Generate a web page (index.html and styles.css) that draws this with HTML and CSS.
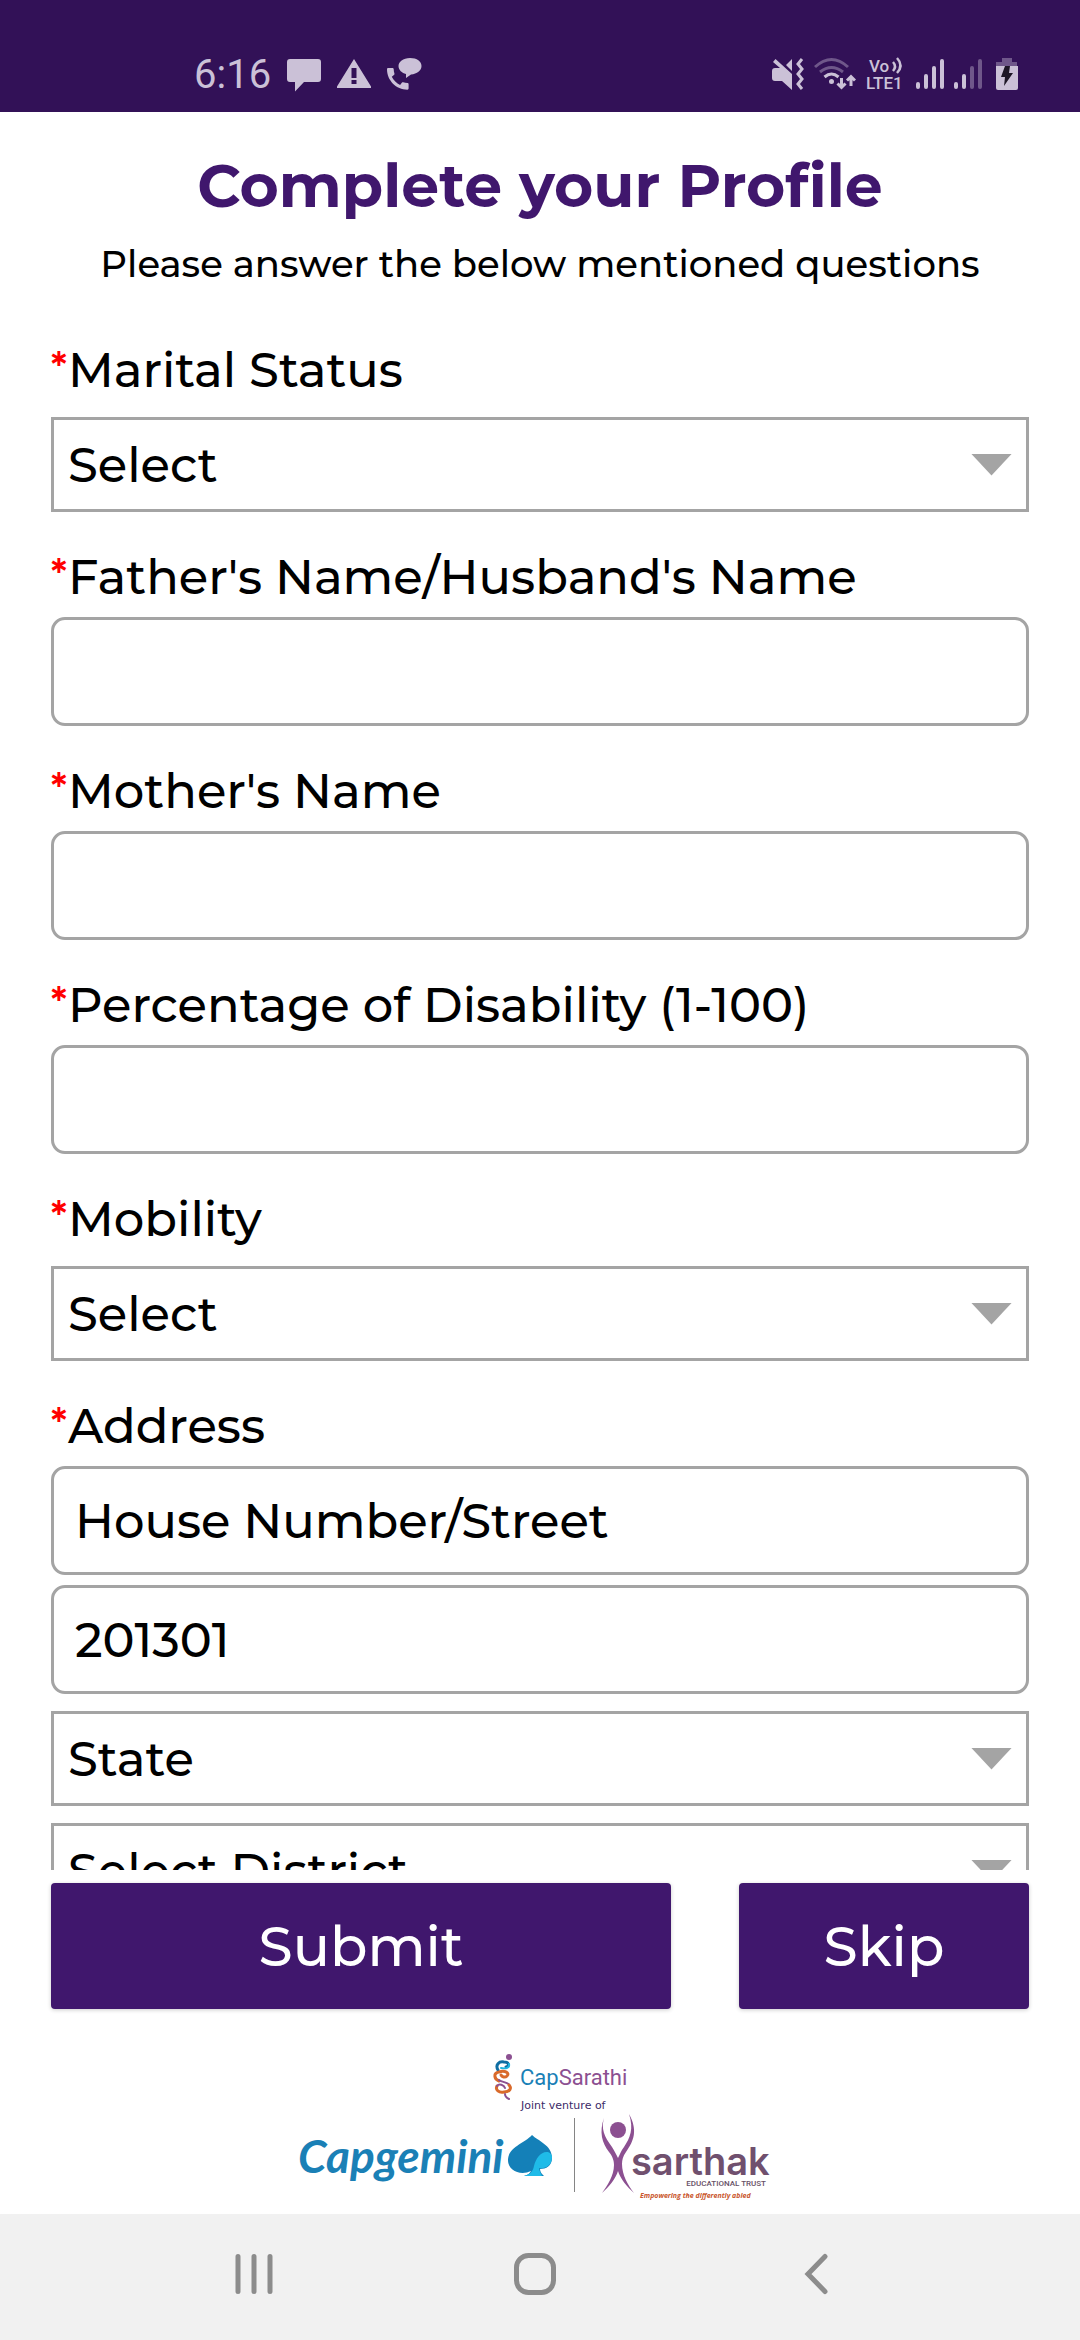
FILE: index.html
```html
<!DOCTYPE html>
<html lang="en">
<head>
  <meta charset="UTF-8" />
  <meta name="viewport" content="width=device-width, initial-scale=1.0" />
  <title>Complete your Profile - CapSarathi</title>
  <link rel="stylesheet" href="styles.css">
</head>
<body>
  <header class="status-bar">
    <div class="status-group">
      <span class="clock">6:16</span>
      <svg width="34" height="36" viewBox="0 0 34 36" fill="currentColor">
        <path d="M3 3h28a3 3 0 0 1 3 3v17a3 3 0 0 1-3 3H17L8 35.500V26H3a3 3 0 0 1-3-3V6a3 3 0 0 1 3-3z"/>
      </svg>
      <svg width="34" height="36" viewBox="0 0 34 36" fill="currentColor">
        <path fill-rule="evenodd" d="M17 3 34 30.500V32H0v-1.500zM14.500 12v10h5V12zm0 12v4h5v-4z"/>
      </svg>
      <svg width="35" height="36" viewBox="0 0 35 36" fill="currentColor">
        <path transform="translate(-3.600 8.500) scale(1.200)" d="M20 15.400c-1.200 0-2.400-.2-3.500-.6-.4-.1-.7 0-1 .2L13.900 17c-2.800-1.300-5.500-3.900-6.900-6.800l2-1.700c.2-.2.300-.6.200-1C8.800 6.500 8.600 5.300 8.600 4c0-.5-.4-1-1-1H4.200C3.600 3 3 3.200 3 4c0 9.300 7.700 17 17 17 .7 0 1-.6 1-1.200v-3.400c0-.6-.4-1-1-1z"/>
        <path d="M23 2c7 0 11.500 3.500 11.500 8S30 18 24 18.500L19 22v-4c-4-1-7.500-4-7.500-8S16 2 23 2z"/>
      </svg>
    </div>
    <div class="status-group right">
      <svg width="32" height="36" viewBox="0 0 32 36" fill="currentColor">
        <path d="M0 15a3 3 0 0 1 3-3h5L1 6l2.500-3L20 18v16L10 25H3a3 3 0 0 1-3-3zM14 9l6-6v12z"/>
        <path d="M30 3l-4 5 4 5-4 5 4 5-4 5 4 5" fill="none" stroke="currentColor" stroke-width="3"/>
      </svg>
      <svg width="42" height="36" viewBox="0 0 42 36" fill="none" stroke="currentColor" stroke-width="3">
        <path class="dim" d="M1 11q16.500-15 33 0"/>
        <path class="dim" d="M6 16q11.500-9 23 0"/>
        <path d="M10.500 21q7-6 14 0" />
        <circle cx="17.500" cy="25.500" r="2.500" fill="currentColor" stroke="none"/>
        <path d="M27.500 22v9M23.500 27.500l4 4 4-4M37 30v-9M33 24.500l4-4 4 4"/>
      </svg>
      <svg class="volte" width="40" height="36" viewBox="0 0 40 36" fill="currentColor">
        <text x="3" y="16" font-size="17">Vo</text>
        <text x="0" y="33" font-size="17">LTE1</text>
        <path d="M27 6q4 4.500 0 9M31 2q7 7.500 0 15" fill="none" stroke="currentColor" stroke-width="2.500"/>
      </svg>
      <svg width="28" height="36" viewBox="0 0 28 36" stroke="currentColor" stroke-width="4" stroke-linecap="round">
        <path d="M2 28v3M10 20v11M18 12v19M26 5v26"/>
      </svg>
      <svg width="28" height="36" viewBox="0 0 28 36" stroke="currentColor" stroke-width="4" stroke-linecap="round">
        <path d="M2 28v3M10 20v11"/>
        <path class="dim" d="M18 12v19M26 5v26"/>
      </svg>
      <svg class="battery" width="22" height="36" viewBox="0 0 22 36" fill="currentColor">
        <path class="dim" d="M6 2h10v4h5v5H0V6h6z"/>
        <path d="M0 10h22v22a2 2 0 0 1-2 2H2a2 2 0 0 1-2-2z"/>
        <path d="M9 10h5l-1 7h4L8 30l1-9H5z" fill="#1d1626"/>
      </svg>
    </div>
  </header>

  <main class="profile">
    <h1>Complete your Profile</h1>
    <p class="subtitle">Please answer the below mentioned questions</p>

    <form class="profile-form" id="profile-form">
      <div class="form-group">
        <label for="marital"><span class="required">*</span>Marital Status</label>
        <div class="select-box">
          <select id="marital"><option>Select</option></select>
        </div>
      </div>
      <div class="form-group">
        <label for="father"><span class="required">*</span>Father's Name/Husband's Name</label>
        <input type="text" id="father" />
      </div>
      <div class="form-group">
        <label for="mother"><span class="required">*</span>Mother's Name</label>
        <input type="text" id="mother" />
      </div>
      <div class="form-group">
        <label for="percentage"><span class="required">*</span>Percentage of Disability (1-100)</label>
        <input type="text" id="percentage" inputmode="numeric" />
      </div>
      <div class="form-group">
        <label for="mobility"><span class="required">*</span>Mobility</label>
        <div class="select-box">
          <select id="mobility"><option>Select</option></select>
        </div>
      </div>
      <div class="form-group">
        <label for="address"><span class="required">*</span>Address</label>
        <input type="text" id="address" placeholder="House Number/Street" />
        <input type="text" id="pincode" aria-label="Pincode" value="201301" />
        <div class="select-box">
          <select id="state" aria-label="State"><option>State</option></select>
        </div>
        <div class="select-box">
          <select id="district" aria-label="District"><option>Select District</option></select>
        </div>
      </div>
    </form>

    <div class="actions">
      <button type="submit" form="profile-form">Submit</button>
      <button type="button">Skip</button>
    </div>
  </main>

  <footer class="partners">
    <svg width="500" height="184" viewBox="10 0 500 184" role="img" aria-label="CapSarathi, joint venture of Capgemini and Sarthak Educational Trust">
      <!-- CapSarathi -->
      <g fill="none" stroke-linecap="round">
        <circle cx="229" cy="27" r="3" fill="#8c5091"/>
        <path d="M218 40c-3-5 1-9 6-8 5 0 6 4 2 5" stroke="#0f6ea3" stroke-width="3"/>
        <path d="M221 38c5 1 9 0 8-4" stroke="#1fb5e0" stroke-width="2"/>
        <path d="M219 51c-5-2-6-8 0-9 6-2 11 1 8 4-2 2-5 1-6-1" stroke="#d96a2b" stroke-width="3"/>
        <path d="M219 50c4 3 12 2 11 8" stroke="#8c5091" stroke-width="2"/>
        <path d="M217 56c-2 4 2 7 7 6 6 0 8-4 5-7" stroke="#d96a2b" stroke-width="3"/>
        <path d="M217 56c2-3 7-1 8 2M225 64c0 3 2 4 4 5" stroke="#8c5091" stroke-width="2"/>
        <text class="logo-capsarathi" x="240" y="55" stroke="none" fill="#1a80b6">Cap<tspan fill="#8c5091">Sarathi</tspan></text>
        <text class="logo-joint" x="241" y="79" stroke="none" fill="#3c2a68">Joint venture of</text>
      </g>
      <!-- Capgemini -->
      <g>
        <text class="logo-capgemini" x="18" y="143" fill="#1a80b6">Capgemini</text>
        <path d="M252 105c6 6 20 10 20 23 0 8-6 11-12 11 0 3 2 5 4 7h-20c4-1 6-3 7-5-10 5-23 0-23-11 0-13 17-17 24-25z" fill="#1480b8"/>
        <path d="M272 127c0 9-7 12-13 11 0 3 2 5 3 8h-18c5-1 9-4 10-10 2-8 7-15 14-14 3 1 4 3 4 5z" fill="#1fbbe8"/>
        <path d="M294.500 88v74" stroke="#858585" stroke-width="1"/>
      </g>
      <!-- Sarthak -->
      <g>
        <circle cx="338" cy="100" r="8" fill="#8c5091"/>
        <path d="M324 88c-5 14-2 25 5 34 4 5 5 9 5 13 0 11-7 21-12 28 7-6 14-15 16-22 2 7 9 16 16 22-6-8-12-18-12-29 0-4 1-8 4-12 8-11 12-22 3-38 5 15 1 24-5 33-3 4-4 7-6 11-2-4-4-8-6-11-8-11-11-18-8-29z" fill="#8c5091"/>
        <text class="logo-sarthak" x="351" y="145" fill="#70506e">sarthak</text>
        <text class="logo-trust" x="486" y="156" text-anchor="end" fill="#675066">EDUCATIONAL TRUST</text>
        <text class="logo-tagline" x="360" y="168" fill="#c9562c">Empowering the differently abled</text>
      </g>
    </svg>
  </footer>

  <nav class="nav-bar">
    <button type="button" aria-label="Recent apps">
      <svg width="42" height="42" viewBox="0 0 42 42"><path d="M5 3.500v35M21 3.500v35M37 3.500v35"/></svg>
    </button>
    <button type="button" aria-label="Home">
      <svg width="42" height="42" viewBox="0 0 42 42"><rect x="2.500" y="2.500" width="37" height="37" rx="12"/></svg>
    </button>
    <button type="button" aria-label="Back">
      <svg width="42" height="42" viewBox="0 0 42 42"><path d="M30 3.500 13 21l17 17.500"/></svg>
    </button>
  </nav>
</body>
</html>
```

FILE: styles.css
```css
* {
  margin: 0;
  padding: 0;
  box-sizing: border-box;
}

body {
  height: 100vh;
  display: flex;
  flex-direction: column;
  background: #ffffff;
  color: #000000;
  font-family: Montserrat, Inter, sans-serif;
  font-weight: 500;
}

svg {
  display: block;
  flex: none;
}

.status-bar {
  flex: none;
  height: 112px;
  padding: 0 62px 20px 194px;
  display: flex;
  justify-content: space-between;
  align-items: flex-end;
  background: #321157;
  color: #cbc1d7;
}

.status-group {
  display: flex;
  align-items: center;
  gap: 16px;
  height: 36px;
}

.status-group.right {
  gap: 10px;
}

.clock {
  font-family: Roboto, sans-serif;
  font-size: 40px;
  font-weight: 400;
}

.dim {
  opacity: 0.4;
}

.volte {
  font-family: Roboto, sans-serif;
  font-weight: 500;
}

.battery {
  margin-left: 4px;
}

.profile {
  flex: 1;
  min-height: 0;
  padding: 38px 51px 0;
  display: flex;
  flex-direction: column;
}

h1 {
  color: #40176d;
  font-size: 60px;
  font-weight: 700;
  line-height: 72px;
  text-align: center;
}

.subtitle {
  margin-top: 18px;
  font-size: 37px;
  line-height: 48px;
  text-align: center;
}

.profile-form {
  flex: 1;
  min-height: 0;
  margin-top: 52px;
  overflow: hidden;
  display: flex;
  flex-direction: column;
  gap: 35px;
}

.form-group {
  flex: none;
  display: flex;
  flex-direction: column;
  gap: 10px;
}

label {
  display: flex;
  align-items: flex-start;
  font-size: 48px;
  line-height: 60px;
}

.required {
  width: 17px;
  color: #ff0000;
  font-size: 38px;
  font-weight: 600;
  line-height: 54px;
}

input,
select {
  width: 100%;
  border: 3px solid #a4a4a4;
  background: transparent;
  color: #000000;
  font: inherit;
  font-size: 48px;
  outline: none;
}

input {
  height: 109px;
  padding: 0 21px;
  border-radius: 14px;
}

input::placeholder {
  color: #000000;
  opacity: 1;
}

.select-box {
  display: grid;
  align-items: center;
  margin-top: 7px;
}

.select-box select {
  grid-area: 1 / 1;
  height: 95px;
  padding: 0 14px;
  border-radius: 0;
  appearance: none;
}

.select-box::after {
  content: "";
  grid-area: 1 / 1;
  justify-self: end;
  width: 41px;
  height: 22px;
  margin-right: 17px;
  background: #a4a4a4;
  clip-path: polygon(0 0, 100% 0, 50% 100%);
  pointer-events: none;
}

.actions {
  flex: none;
  display: grid;
  grid-template-columns: 620fr 290fr;
  gap: 68px;
  padding-top: 13px;
}

.actions button {
  height: 126px;
  border: none;
  border-radius: 4px;
  background: #40176d;
  color: #ffffff;
  font: inherit;
  font-size: 55px;
  box-shadow: 0 1px 4px rgba(0, 0, 0, 0.2);
  cursor: pointer;
}

.partners {
  flex: none;
  display: flex;
  justify-content: center;
  padding-top: 21px;
}

.logo-capsarathi {
  font-family: Roboto, sans-serif;
  font-size: 22px;
  font-weight: 400;
}

.logo-joint {
  font-family: "DejaVu Sans", sans-serif;
  font-size: 11px;
  font-weight: 400;
}

.logo-capgemini {
  font-family: Lato, sans-serif;
  font-size: 46px;
  font-style: italic;
  font-weight: 700;
}

.logo-sarthak {
  font-family: Inter, sans-serif;
  font-size: 38px;
  font-weight: 600;
}

.logo-trust {
  font-family: Roboto, sans-serif;
  font-size: 8px;
}

.logo-tagline {
  font-family: "Open Sans", sans-serif;
  font-size: 7px;
  font-style: italic;
  font-weight: 700;
}

.nav-bar {
  flex: none;
  height: 126px;
  padding: 0 124px 0 113px;
  display: grid;
  grid-template-columns: repeat(3, 1fr);
  background: #f1f1f1;
}

.nav-bar button {
  display: flex;
  align-items: center;
  justify-content: center;
  padding-bottom: 6px;
  border: none;
  background: none;
  cursor: pointer;
}

.nav-bar svg {
  fill: none;
  stroke: #8c8c8c;
  stroke-width: 5;
  stroke-linecap: round;
}
```
